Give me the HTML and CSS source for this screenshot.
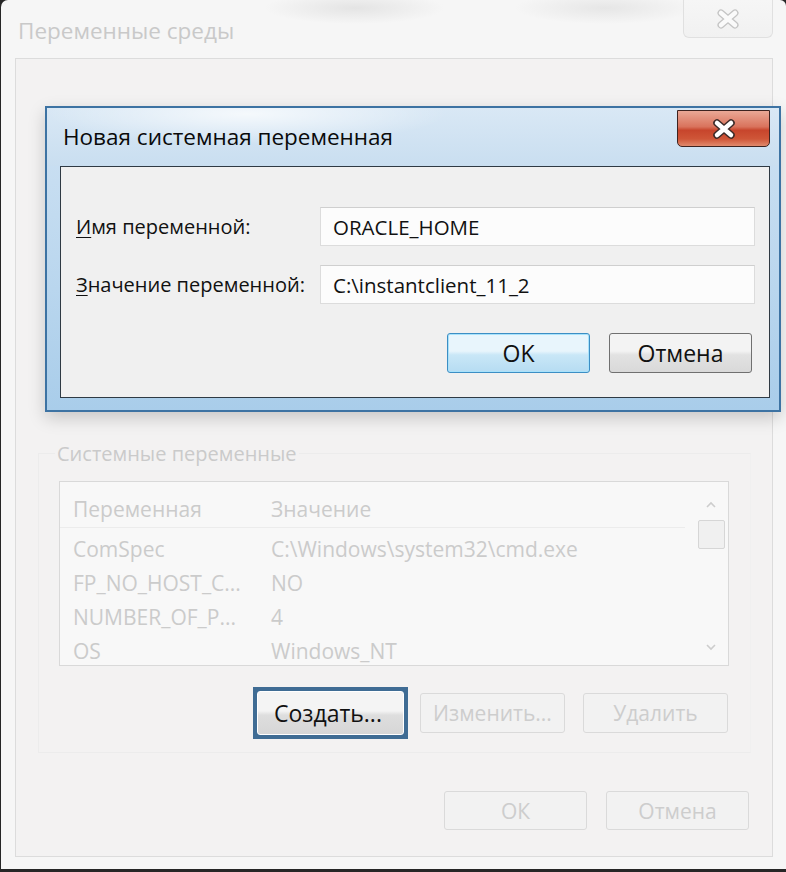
FILE: index.html
```html
<!DOCTYPE html>
<html lang="ru">
  <head>
    <meta charset="UTF-8" />
    <title>Переменные среды</title>
    <link rel="stylesheet" href="styles.css">
  </head>
  <body>
    <div class="window">
      <div class="titlebar">
        <div class="wtitle">Переменные среды</div>
        <div class="wclose">
          <svg width="26" height="20" viewBox="0 0 26 20">
            <path d="M6 4 L20 16 M20 4 L6 16" stroke="#c4c4c4" stroke-width="7" stroke-linecap="round" fill="none"/>
            <path d="M6 4 L20 16 M20 4 L6 16" stroke="#fafafa" stroke-width="4.5" stroke-linecap="round" fill="none"/>
          </svg>
        </div>
      </div>
      <div class="content">
        <div class="group">
          <div class="group-title">Системные переменные</div>
          <div class="listbox">
            <div class="table">
              <div class="row head">
                <div class="c1">Переменная</div>
                <div class="c2">Значение</div>
              </div>
              <div class="rows">
                <div class="row"><div class="c1">ComSpec</div><div class="c2">C:\Windows\system32\cmd.exe</div></div>
                <div class="row"><div class="c1">FP_NO_HOST_C...</div><div class="c2">NO</div></div>
                <div class="row"><div class="c1">NUMBER_OF_P...</div><div class="c2">4</div></div>
                <div class="row"><div class="c1">OS</div><div class="c2">Windows_NT</div></div>
              </div>
            </div>
            <div class="scrollbar">
              <svg width="12" height="8" viewBox="0 0 12 8"><path d="M2 6 L6 2 L10 6" stroke="#cdcdcd" stroke-width="1.6" fill="none"/></svg>
              <div class="thumb"></div>
              <div class="track"></div>
              <svg width="12" height="8" viewBox="0 0 12 8"><path d="M2 2 L6 6 L10 2" stroke="#cdcdcd" stroke-width="1.6" fill="none"/></svg>
            </div>
          </div>
          <div class="btnrow">
            <div class="focus-frame"><div class="btn-create">Создать...</div></div>
            <div class="btn faded">Изменить...</div>
            <div class="btn faded">Удалить</div>
          </div>
        </div>
        <div class="footer">
          <div class="btn faded">ОК</div>
          <div class="btn faded">Отмена</div>
        </div>
      </div>

      <!-- modal dialog -->
      <div class="modal">
        <div class="mtitlebar">
          <div class="mtitle">Новая системная переменная</div>
          <div class="mclose">
            <svg width="28" height="20" viewBox="0 0 28 20">
              <path d="M7 4 L21 16 M21 4 L7 16" stroke="#3b2a28" stroke-width="7.5" stroke-linecap="round" fill="none"/>
              <path d="M7 4 L21 16 M21 4 L7 16" stroke="#ffffff" stroke-width="4.5" stroke-linecap="round" fill="none"/>
            </svg>
          </div>
        </div>
        <div class="panel">
          <div class="form">
            <div class="label"><u>И</u>мя переменной:</div>
            <div class="input">ORACLE_HOME</div>
            <div class="label"><u>З</u>начение переменной:</div>
            <div class="input">C:\instantclient_11_2</div>
          </div>
          <div class="mbuttons">
            <div class="btn ok">OK</div>
            <div class="btn">Отмена</div>
          </div>
        </div>
      </div>
    </div>
  </body>
</html>
```

FILE: styles.css
```css
* {
  box-sizing: border-box;
}
body {
  margin: 0;
  background: #262626;
  font-family: "Open Sans", "Noto Sans", sans-serif;
}
.window {
  position: relative;
  width: 785px;
  height: 869px;
  margin-left: 1px;
  background: #f6f6f6;
  border-radius: 7px 6px 0 0;
  display: flex;
  flex-direction: column;
  padding: 0 13px 12px 14px;
}
.titlebar {
  height: 58px;
  display: flex;
  justify-content: space-between;
  align-items: flex-start;
  background-image: radial-gradient(ellipse 90px 16px at 340px 8px, #e4e4e4, rgba(246, 246, 246, 0)),
    radial-gradient(ellipse 90px 16px at 590px 8px, #e6e6e6, rgba(246, 246, 246, 0));
}
.wtitle {
  margin: 16px 0 0 3px;
  font-size: 22.5px;
  color: #c9c9c9;
  line-height: 30px;
}
.wclose {
  width: 90px;
  height: 38px;
  border: 1px solid #e0e0e0;
  border-top: none;
  border-radius: 0 0 6px 6px;
  background: linear-gradient(#f6f6f6, #f1f1f1);
  display: flex;
  align-items: center;
  justify-content: center;
}
.content {
  flex: 1;
  border: 1px solid #dcdcdc;
  background: #f3f2f2;
  display: flex;
  flex-direction: column;
}
.group {
  margin: 394px 21px 0 22px;
  border: 1px solid #ececec;
  border-right-color: #f0f0f0;
  padding: 0 21px 13px 20px;
}
.group-title {
  width: fit-content;
  margin: -14px 0 0 -4px;
  padding: 0 2px;
  line-height: 28px;
  font-size: 20px;
  color: #cacaca;
  background: #f3f2f2;
}
.listbox {
  margin-top: 13px;
  height: 185px;
  border: 1px solid #d9d9d9;
  background: #f8f8f8;
  display: flex;
  overflow: hidden;
}
.table {
  flex: 1;
  font-size: 21px;
  color: #cbcbcb;
}
.row {
  display: flex;
  height: 34px;
  align-items: center;
  white-space: nowrap;
}
.row.head {
  height: 46px;
  padding-top: 8px;
  border-bottom: 1px solid #ececec;
  margin-right: 10px;
}
.rows {
  padding-top: 4px;
}
.c1 {
  width: 211px;
  padding-left: 13px;
}
.c2 {
  flex: 1;
}
.scrollbar {
  width: 33px;
  padding: 19px 3px 14px 2px;
  display: flex;
  flex-direction: column;
  align-items: center;
}
.thumb {
  margin-top: 11px;
  width: 27px;
  height: 29px;
  border: 1px solid #d6d6d6;
  border-radius: 2px;
  background: #f0f0f0;
}
.track {
  flex: 1;
}
.btnrow {
  margin-top: 21px;
  display: flex;
  align-items: center;
  gap: 12px;
  padding-left: 194px;
}
.btnrow .btn + .btn {
  margin-left: 6px;
}
.focus-frame {
  width: 155px;
  height: 52px;
  border: 3px solid #3f6c94;
  background: #3f6c94;
  padding: 1px;
}
.btn-create {
  height: 100%;
  border: 1px solid #ffffff;
  border-radius: 3px;
  background: linear-gradient(#f4f4f4 45%, #dedede 55%, #d6d6d6);
  font-size: 23px;
  color: #111;
  display: flex;
  align-items: center;
  padding-left: 16px;
}
.btn {
  width: 143px;
  height: 40px;
  border: 1px solid #707070;
  border-radius: 3px;
  background: linear-gradient(#f3f3f3 45%, #e2e2e2 55%, #d9d9d9);
  display: flex;
  align-items: center;
  justify-content: center;
  font-size: 23px;
  color: #111;
}
.btnrow .btn {
  width: 145px;
}
.btn.faded {
  border-color: #dadada;
  background: #f2f2f2;
  color: #cdcdcd;
  font-size: 21px;
}
.footer {
  margin-top: 38px;
  display: flex;
  justify-content: flex-end;
  gap: 19px;
  padding-right: 23px;
}
.footer .btn {
  height: 39px;
}

/* modal dialog */
.modal {
  position: absolute;
  left: 44px;
  top: 106px;
  width: 736px;
  height: 306px;
  border: 2px solid #3d73a3;
  background: linear-gradient(#cfe2f3, #b9d6ee 60%, #a9cdea);
  box-shadow: 0 6px 16px rgba(0, 0, 0, 0.18);
  display: flex;
  flex-direction: column;
  padding: 0 9px 12px 13px;
}
.mtitlebar {
  height: 58px;
  display: flex;
  justify-content: space-between;
  align-items: flex-start;
  margin-left: -13px;
  margin-right: -9px;
  padding: 0 9px 0 16px;
  background-image: radial-gradient(ellipse 200px 30px at 200px 6px, rgba(255, 255, 255, 0.75), rgba(255, 255, 255, 0)),
    linear-gradient(#d9e8f5, #c9def0);
}
.mtitle {
  margin-top: 14px;
  font-size: 22.5px;
  line-height: 30px;
  color: #0a0a0a;
}
.mclose {
  margin-top: 2px;
  width: 93px;
  height: 37px;
  border: 1px solid #3d2320;
  border-radius: 0 0 5px 5px;
  background: linear-gradient(#eaa896, #d9735c 45%, #c7452c 55%, #cf5638 80%, #e08a6d);
  display: flex;
  align-items: center;
  justify-content: center;
}
.panel {
  flex: 1;
  border: 1px solid #2f3a44;
  background: #f0f0f0;
  padding: 40px 14px 0 15px;
}
.form {
  display: grid;
  grid-template-columns: 1fr 435px;
  row-gap: 19px;
  align-items: center;
}
.label {
  font-size: 20px;
  color: #111;
}
.label u {
  text-decoration-thickness: 1px;
  text-underline-offset: 3px;
}
.input {
  height: 39px;
  border: 1px solid #dcdcdc;
  border-top-color: #cfcfcf;
  background: #fcfcfc;
  font-size: 20.5px;
  color: #111;
  padding-left: 12px;
  display: flex;
  align-items: center;
}
.mbuttons {
  margin-top: 29px;
  display: flex;
  justify-content: flex-end;
  gap: 19px;
  padding-right: 3px;
}
.btn.ok {
  border-color: #3c8ec4;
  background: linear-gradient(#e8f5fc 45%, #c9e7f7 55%, #b6dcf2);
  box-shadow: inset 0 0 0 1px #a8e2fb;
}
```
